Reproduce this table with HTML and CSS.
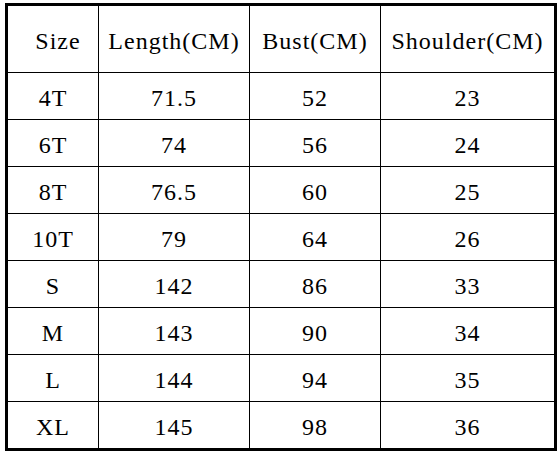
FILE: index.html
```html
<!DOCTYPE html>
<html>
<head>
<meta charset="utf-8">
<link rel="stylesheet" href="styles.css">
</head>
<body>
<div class="chart">
  <div class="cell head first">Size</div>
  <div class="cell head">Length(CM)</div>
  <div class="cell head">Bust(CM)</div>
  <div class="cell head">Shoulder(CM)</div>

  <div class="cell">4T</div><div class="cell">71.5</div><div class="cell">52</div><div class="cell">23</div>
  <div class="cell">6T</div><div class="cell">74</div><div class="cell">56</div><div class="cell">24</div>
  <div class="cell">8T</div><div class="cell">76.5</div><div class="cell">60</div><div class="cell">25</div>
  <div class="cell">10T</div><div class="cell">79</div><div class="cell">64</div><div class="cell">26</div>
  <div class="cell">S</div><div class="cell">142</div><div class="cell">86</div><div class="cell">33</div>
  <div class="cell">M</div><div class="cell">143</div><div class="cell">90</div><div class="cell">34</div>
  <div class="cell">L</div><div class="cell">144</div><div class="cell">94</div><div class="cell">35</div>
  <div class="cell">XL</div><div class="cell">145</div><div class="cell">98</div><div class="cell">36</div>
</div>
</body>
</html>
```
FILE: styles.css
```css
html, body {
  margin: 0;
  padding: 0;
  background: #ffffff;
}

.chart {
  margin: 3px 0 0 5px;
  width: 546px;
  display: grid;
  grid-template-columns: 90px 150px 130px 173px;
  grid-template-rows: 66px repeat(8, 46px);
  gap: 1px;
  background: #000000;
  border: 3px solid #000000;
  font-family: "Liberation Serif", "DejaVu Serif", serif;
  font-size: 24px;
  letter-spacing: 1px;
  color: #000000;
}

.cell {
  background: #ffffff;
  display: flex;
  align-items: center;
  justify-content: center;
  padding-top: 4px;
  box-sizing: border-box;
  white-space: nowrap;
}

.head.first {
  padding-left: 10px;
}
```
